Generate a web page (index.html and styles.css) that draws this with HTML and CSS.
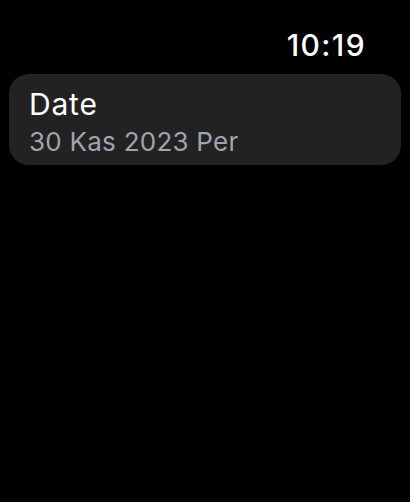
FILE: index.html
```html
<!DOCTYPE html>
<html lang="tr">
<head>
<meta charset="utf-8">
<link rel="stylesheet" href="styles.css">
</head>
<body>
<div class="screen">
  <header class="status">
    <span class="time">10:19</span>
  </header>
  <div class="card">
    <div class="title">Date</div>
    <div class="subtitle">30 Kas 2023 Per</div>
  </div>
</div>
</body>
</html>
```

FILE: styles.css
```css
html, body {
  margin: 0;
  padding: 0;
  background: #000;
}
body {
  font-family: Inter, "Noto Sans", sans-serif;
  -webkit-font-smoothing: antialiased;
}
.screen {
  width: 410px;
  height: 502px;
  background: #000;
  overflow: hidden;
}
.status {
  display: flex;
  justify-content: flex-end;
  padding: 27px 44px 0 0;
  height: 36px;
}
.time {
  color: #fff;
  font-size: 30px;
  font-weight: 500;
  line-height: 36px;
  letter-spacing: 1.4px;
}
.card {
  margin: 11px 9px 0 9px;
  background: #222222;
  border-radius: 20px;
  padding: 12px 20px 8px 20px;
}
.title {
  color: #fff;
  font-size: 30px;
  font-weight: 400;
  line-height: 36px;
  letter-spacing: 0.8px;
}
.subtitle {
  color: #a0a4ae;
  font-size: 26px;
  font-weight: 400;
  line-height: 30px;
  margin-top: 5px;
  letter-spacing: 0.25px;
}
```
